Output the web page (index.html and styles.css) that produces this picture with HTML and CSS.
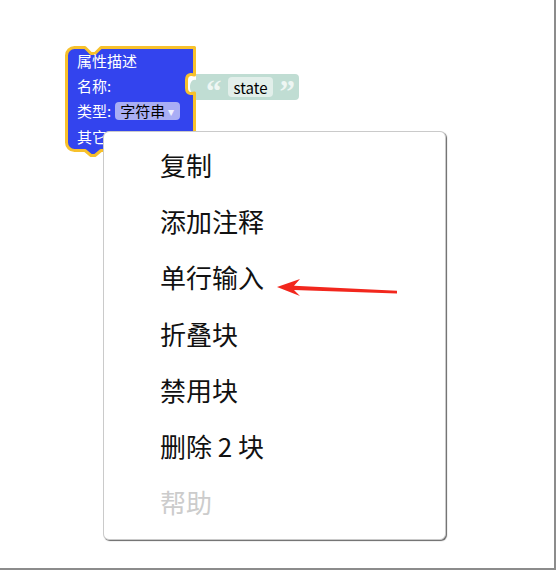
FILE: index.html
```html
<!DOCTYPE html>
<html lang="zh">
<head>
<meta charset="utf-8">
<link rel="stylesheet" href="styles.css">
</head>
<body>
<div class="workspace">
  <div class="block-str">
    <svg class="shape" width="111" height="26" viewBox="0 0 111 26">
      <path d="M 8 0 H 107 Q 111 0 111 4 V 22 Q 111 26 107 26 H 8 V 20 C 0 22, 0 4, 8 6 Z" fill="#c0ddd3"/>
    </svg>
    <div class="str-row">
      <span class="quote">“</span>
      <span class="field">state</span>
      <span class="quote">”</span>
    </div>
  </div>
  <div class="block-main">
    <svg class="shape" width="140" height="116" viewBox="0 0 140 116">
      <path d="M 1.5 9.5 A 8 8 0 0 1 9.5 1.5 H 20 l 6 6 h 4 l 6 -6 H 129.5 V 29 C 129.5 29, 121.5 26, 121.5 34 V 42 C 121.5 50, 129.5 47, 129.5 47 V 104.5 H 36 l -6 5 h -4 l -6 -5 H 9.5 A 8 8 0 0 1 1.5 96.5 Z" fill="#3344ee" stroke="#f7c12c" stroke-width="3" stroke-linejoin="round"/>
    </svg>
    <div class="rows">
      <div class="row">属性描述</div>
      <div class="row">名称:</div>
      <div class="row">类型: <span class="dropdown">字符串<span class="caret">▾</span></span></div>
      <div class="row">其它</div>
    </div>
  </div>
  <div class="menu">
    <div class="item">复制</div>
    <div class="item">添加注释</div>
    <div class="item">单行输入</div>
    <div class="item">折叠块</div>
    <div class="item">禁用块</div>
    <div class="item">删除 2 块</div>
    <div class="item disabled">帮助</div>
  </div>
  <svg class="arrow" width="556" height="570" viewBox="0 0 556 570">
    <polygon points="277,287 300,279 294,285.8 397,290.8 397,293.4 294,289.9 300,296" fill="#f2271d"/>
  </svg>
</div>
</body>
</html>
```
FILE: styles.css
```css
html, body {
  margin: 0;
  padding: 0;
  background: #fff;
}
.workspace {
  position: relative;
  width: 556px;
  height: 570px;
  box-sizing: border-box;
  border-right: 2px solid #8c8c8c;
  border-bottom: 2px solid #8c8c8c;
  overflow: hidden;
  font-family: "Noto Sans CJK SC", "Noto Sans", sans-serif;
}
.shape {
  position: absolute;
  left: 0;
  top: 0;
  overflow: visible;
}
.block-main {
  position: absolute;
  left: 65px;
  top: 46px;
  width: 131px;
  height: 106px;
}
.rows {
  position: relative;
  padding: 2px 0 0 12px;
  display: flex;
  flex-direction: column;
}
.row {
  height: 25.3px;
  display: flex;
  align-items: center;
  gap: 4px;
  color: #fff;
  font-size: 15px;
  line-height: 18px;
  white-space: nowrap;
}
.dropdown {
  display: inline-flex;
  align-items: center;
  height: 18px;
  padding: 0 6px 0 5px;
  background: #a9aef5;
  border-radius: 4px;
  color: #000;
  font-size: 15px;
}
.caret {
  color: #eef0ff;
  font-size: 12px;
  margin-left: 3px;
}
.block-str {
  position: absolute;
  left: 188px;
  top: 74px;
  width: 111px;
  height: 26px;
}
.str-row {
  position: relative;
  display: flex;
  align-items: center;
  height: 26px;
  padding-left: 18px;
  gap: 6px;
}
.quote {
  color: #eef6f3;
  font-family: "Liberation Serif", serif;
  font-weight: bold;
  font-size: 31px;
  line-height: 24px;
  height: 24px;
  margin-top: 9px;
}
.field {
  display: inline-flex;
  align-items: center;
  height: 20px;
  padding: 0 6px;
  background: #e2efea;
  border-radius: 4px;
  color: #000;
  font-size: 15px;
}
.arrow {
  position: absolute;
  left: 0;
  top: 0;
}
.menu {
  position: absolute;
  left: 103px;
  top: 131px;
  width: 343px;
  height: 409px;
  box-sizing: border-box;
  background: #fff;
  border: 1px solid #cacaca;
  border-radius: 6px;
  box-shadow: 1px 1px 1px 0 #666;
  padding: 5px 0 0 0;
}
.item {
  height: 56.2px;
  line-height: 56px;
  padding-left: 56px;
  font-size: 26px;
  color: #111;
}
.item.disabled {
  color: #cccccc;
}
```
